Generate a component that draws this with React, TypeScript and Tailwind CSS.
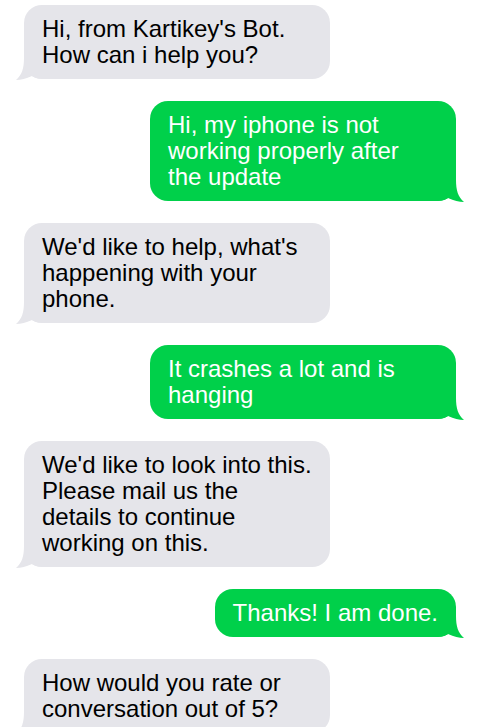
import React from 'react';

type Msg = { from: 'bot' | 'me'; lines: string[]; wide?: boolean };

const MESSAGES: Msg[] = [
  { from: 'bot', lines: ["Hi, from Kartikey's Bot.", 'How can i help you?'], wide: true },
  { from: 'me', lines: ['Hi, my iphone is not', 'working properly after', 'the update'], wide: true },
  { from: 'bot', lines: ["We'd like to help, what's", 'happening with your', 'phone.'], wide: true },
  { from: 'me', lines: ['It crashes a lot and is', 'hanging'], wide: true },
  {
    from: 'bot',
    lines: ["We'd like to look into this.", 'Please mail us the', 'details to continue', 'working on this.'],
    wide: true,
  },
  { from: 'me', lines: ['Thanks! I am done.'] },
  { from: 'bot', lines: ['How would you rate or', 'conversation out of 5?'], wide: true },
];

// little curled tail at the bottom corner of a bubble
const Tail = ({ color, side }: { color: string; side: 'left' | 'right' }) => (
  <svg
    width="30"
    height="22"
    viewBox="0 0 30 22"
    className={`absolute -bottom-px ${side === 'left' ? '-left-2' : '-right-2 scale-x-[-1]'}`}
  >
    <path d="M8 0 C8 10 6 17 0 22 C5 22 10 20.5 16 18 C19 20 23 21 30 21 L30 0 Z" fill={color} />
  </svg>
);

const Bubble = ({ msg }: { msg: Msg }) => {
  const mine = msg.from === 'me';
  const color = mine ? '#00d04a' : '#e5e5ea';
  return (
    <div className={`flex ${mine ? 'justify-end' : 'justify-start'}`}>
      <div
        className={`relative rounded-[18px] px-[18px] py-[11px] ${msg.wide ? 'w-[306px]' : ''} ${
          mine ? 'bg-[#00d04a] text-white' : 'bg-[#e5e5ea] text-black'
        }`}
      >
        <Tail color={color} side={mine ? 'right' : 'left'} />
        <p className="relative whitespace-nowrap text-[24px] leading-[26px]">
          {msg.lines.map((line, i) => (
            <React.Fragment key={i}>
              {line}
              {i < msg.lines.length - 1 && <br />}
            </React.Fragment>
          ))}
        </p>
      </div>
    </div>
  );
};

export default function App() {
  return (
    <div
      className="min-h-screen bg-white px-6 pt-[5px] pb-10 flex flex-col gap-[22px]"
      style={{ fontFamily: '"Liberation Sans", Arial, sans-serif' }}
    >
      {MESSAGES.map((m, idx) => (
        <Bubble key={idx} msg={m} />
      ))}
    </div>
  );
}
